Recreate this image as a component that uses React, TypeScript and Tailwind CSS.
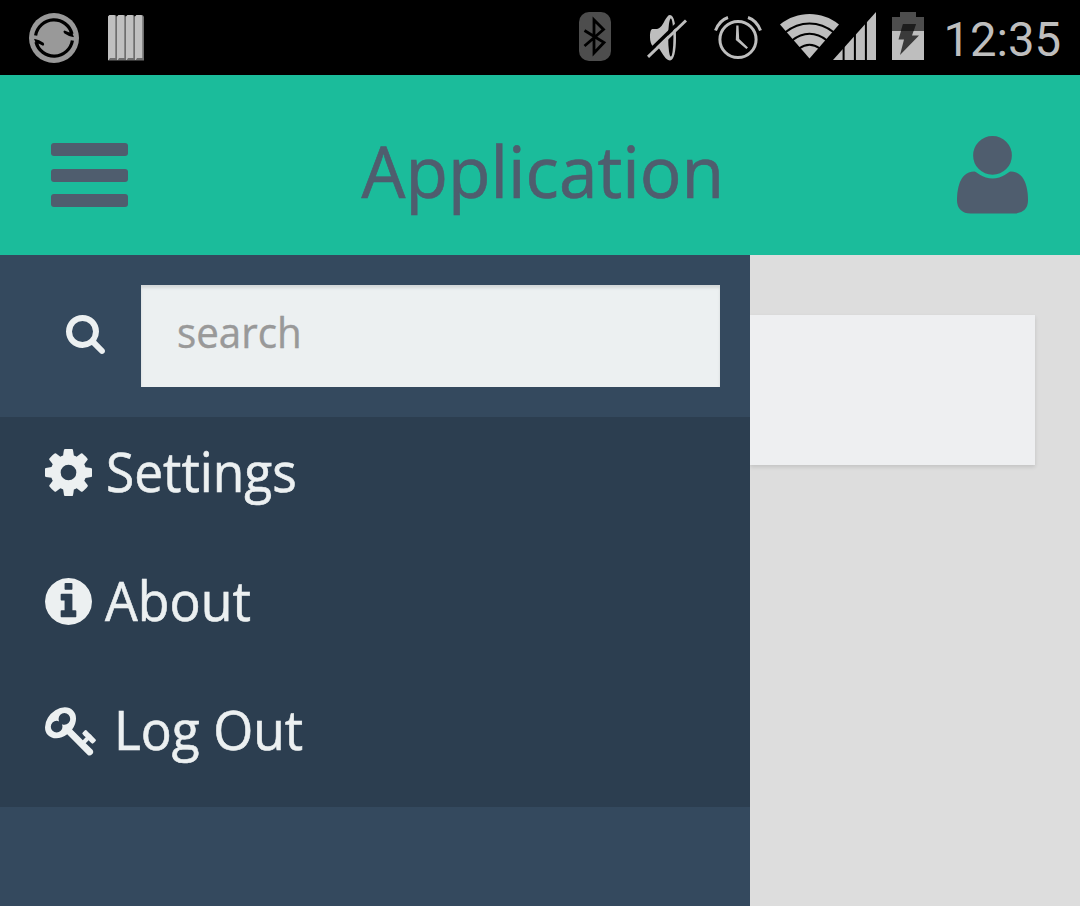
import React from "react";

const PATHS = {
  user: "M1600 1405q0 120-73 189.5t-194 69.5h-874q-121 0-194-69.5t-73-189.5q0-53 3.5-103.5t14-109 26.5-108.5 43-97.5 62-81 85.5-53.5 111.5-20q9 0 42 21.5t74.5 48 108 48 133.5 21.5 133.5-21.5 108-48 74.5-48 42-21.5q61 0 111.5 20t85.5 53.5 62 81 43 97.5 26.5 108.5 14 109 3.5 103.5zm-320-893q0 159-112.5 271.5t-271.5 112.5-271.5-112.5-112.5-271.5 112.5-271.5 271.5-112.5 271.5 112.5 112.5 271.5z",
  search: "M1216 832q0-185-131.5-316.5t-316.5-131.5-316.5 131.5-131.5 316.5 131.5 316.5 316.5 131.5 316.5-131.5 131.5-316.5zm512 832q0 52-38 90t-90 38q-54 0-90-38l-343-342q-179 124-399 124-143 0-273.5-55.5t-225-150-150-225-55.5-273.5 55.5-273.5 150-225 225-150 273.5-55.5 273.5 55.5 225 150 150 225 55.5 273.5q0 220-124 399l343 343q37 37 37 90z",
  cog: "M1152 896q0-106-75-181t-181-75-181 75-75 181 75 181 181 75 181-75 75-181zm512-109v222q0 12-8 23t-20 13l-185 28q-19 54-39 91 35 50 107 138 10 12 10 25t-9 23q-27 37-99 108t-94 71q-12 0-26-9l-138-108q-44 23-91 38-16 136-29 186-7 28-36 28h-222q-14 0-24.5-8.5t-11.5-21.5l-28-184q-49-16-90-37l-141 107q-10 9-25 9-14 0-25-11-126-114-165-168-7-10-7-23 0-12 8-23 15-21 51-66.5t54-70.5q-27-50-41-99l-183-27q-13-2-21-12.5t-8-23.5v-222q0-12 8-23t19-13l186-28q14-46 39-92-40-57-107-138-10-12-10-24 0-10 9-23 26-36 98.5-107.5t94.5-71.5q13 0 26 10l138 107q44-23 91-38 16-136 29-186 7-28 36-28h222q14 0 24.5 8.5t11.5 21.5l28 184q49 16 90 37l142-107q9-9 24-9 13 0 25 10 129 119 165 170 7 8 7 22 0 12-8 23-15 21-51 66.5t-54 70.5q26 50 41 98l183 28q13 2 21 12.5t8 23.5z",
  info: "M1152 1376v-160q0-14-9-23t-23-9h-96v-512q0-14-9-23t-23-9h-320q-14 0-23 9t-9 23v160q0 14 9 23t23 9h96v320h-96q-14 0-23 9t-9 23v160q0 14 9 23t23 9h448q14 0 23-9t9-23zm-128-896v-160q0-14-9-23t-23-9h-192q-14 0-23 9t-9 23v160q0 14 9 23t23 9h192q14 0 23-9t9-23zm640 416q0 209-103 385.5t-279.5 279.5-385.5 103-385.5-103-279.5-279.5-103-385.5 103-385.5 279.5-279.5 385.5-103 385.5 103 279.5 279.5 103 385.5z",
  key: "M832 512q0-80-56-136t-136-56-136 56-56 136q0 42 19 83-41-19-83-19-80 0-136 56t-56 136 56 136 136 56 136-56 56-136q0-42-19-83 41 19 83 19 80 0 136-56t56-136zm851 704q0 17-49 66t-66 49q-9 0-28.5-16t-36.5-33-38.5-40-24.5-26l-96 96 220 220q28 28 28 68 0 42-39 81t-81 39q-40 0-68-28l-671-671q-176 131-365 131-163 0-265.5-102.5t-102.5-265.5q0-160 95-313t248-248 313-95q163 0 265.5 102.5t102.5 265.5q0 189-131 365l355 355 96-96q-3-3-26-24.5t-40-38.5-33-36.5-16-28.5q0-17 49-66t66-49q13 0 23 10 6 6 46 44.5t82 79.5 86.5 86 73 78 28.5 41z",
};

function Glyph({ name, viewBox, className }: { name: keyof typeof PATHS; viewBox: string; className: string }) {
  return (
    <svg viewBox={viewBox} className={className} fill="currentColor" aria-hidden="true">
      <path d={PATHS[name]} />
    </svg>
  );
}

function SyncIcon() {
  return (
    <svg width="50" height="50" viewBox="0 0 50 50" aria-hidden="true">
      <circle cx="25" cy="25" r="25" fill="#999" />
      <g fill="none" stroke="#000" strokeWidth="3.2" strokeLinejoin="round">
        <path d="M6.600 22.500A18.600 18.600 0 0 1 43 21" />
        <path d="M43.400 27.500A18.600 18.600 0 0 1 7 29" />
      </g>
      <path d="M45 24.200L41 14.500L40.500 19.500L35.500 17.500Q33.500 18 35.500 20.500Q39.500 23.500 45 24.200z" fill="#000" />
      <path d="M5 25.800L9 35.500L9.500 30.500L14 32.800Q16 32 14.500 29.800Q10.500 26.800 5 25.800z" fill="#000" />
      <path d="M4 25L9 25M41 25L46 25" stroke="#999" strokeWidth="1.500" />
    </svg>
  );
}

function BarsStackIcon() {
  return (
    <svg width="36" height="46" viewBox="0 0 36 46" aria-hidden="true">
      {[0, 9, 18, 27].map((x) => (
        <g key={x}>
          <path d={`M${x} 1.5l1.5-1.5h6l1.5 1.5V45.5H${x}z`} fill="#6e6e6e" />
          <path d={`M${x} 1.5l1.5-1.5h5l.8 1.5V43H${x + 2}L${x + 0.8} 45H${x}z`} fill="#c0c0c0" />
        </g>
      ))}
    </svg>
  );
}

function BluetoothIcon() {
  return (
    <svg width="32" height="49" viewBox="0 0 32 49" aria-hidden="true">
      <rect width="32" height="49" rx="10" fill="#4d4d4d" />
      <path d="M5.500 18.500L25 30.500L15 41V8L24.500 17.500L5.500 34" fill="none" stroke="#000" strokeWidth="2.8" />
    </svg>
  );
}

function MutedIcon() {
  return (
    <svg width="40" height="46" viewBox="0 0 40 46" aria-hidden="true">
      <path d="M5 14h5c4-1 6-5 8-9 2-3 3-5 5-5 4 0 6 10 6 23s-2 22.500-6 22.500c-3 0-6-4-9-9-1-2-3-5-6-5H6c-2-2-3-6-3-9 0-3 0-7 2-8.500z" fill="#bebebe" />
      <ellipse cx="23.800" cy="22.500" rx="2.600" ry="19" fill="#000" />
      <path d="M-1 39.500L36.500 3" stroke="#000" strokeWidth="3.500" />
      <path d="M1 41.800L39 5.500" stroke="#bebebe" strokeWidth="3" />
    </svg>
  );
}

function AlarmIcon() {
  return (
    <svg width="48" height="46" viewBox="0 0 48 46" aria-hidden="true">
      <g fill="none" stroke="#bebebe">
        <circle cx="24" cy="24.500" r="18.100" strokeWidth="3" />
        <path d="M1.500 15.500C4 9 8 4.500 14 2.500M46.500 15.500C44 9 40 4.500 34 2.500" strokeWidth="3" />
      </g>
      <path d="M22.300 10.500h2.200l.7 13.500 8.800 8.500-1.600 1.600L21.800 25z" fill="#bebebe" />
    </svg>
  );
}

function WifiIcon() {
  return (
    <svg width="59" height="45" viewBox="0 0 59 45" aria-hidden="true">
      <path d="M0 10.500C17-3.500 42-3.500 59 10.500L29.500 44.500z" fill="#bebebe" />
      <g fill="none" stroke="#000" strokeWidth="2">
        <path d="M5 18.500C20 6.500 39 6.500 54 18.500" />
        <path d="M12 26.500C23 17.500 36 17.500 47 26.500" />
        <path d="M19 34.500C26 29.500 33 29.500 40 34.500" />
      </g>
    </svg>
  );
}

function SignalIcon() {
  return (
    <svg width="43" height="48" viewBox="0 0 43 48" aria-hidden="true">
      <path d="M0 48L43 0V48z" fill="#bebebe" />
      <path d="M10.600 0V48M21.900 0V48M32.900 0V48" stroke="#000" strokeWidth="2" />
    </svg>
  );
}

function BatteryIcon() {
  return (
    <svg width="32" height="48" viewBox="0 0 32 48" aria-hidden="true">
      <path d="M0 5h8V0h16v5h8v14H0z" fill="#4d4d4d" />
      <path d="M0 19h32v29H0z" fill="#bebebe" />
      <path d="M11 12h13l-4 11.500h7L8 43l4-15.500H6.500z" fill="#3a3a3a" />
      <path d="M11 12h13l-2.400 7H8.900z" fill="#1d1d1d" />
    </svg>
  );
}

function StatusBar() {
  return (
    <div className="flex h-[75px] shrink-0 items-start bg-black">
      <div className="ml-[29px] mt-[13px]"><SyncIcon /></div>
      <div className="ml-[29px] mt-[15px]"><BarsStackIcon /></div>
      <div className="ml-auto mt-3"><BluetoothIcon /></div>
      <div className="ml-9 mt-[15px]"><MutedIcon /></div>
      <div className="ml-[27px] mt-[15px]"><AlarmIcon /></div>
      <div className="ml-[18px] mt-[14px]"><WifiIcon /></div>
      <div className="-ml-1.5 mt-3"><SignalIcon /></div>
      <div className="ml-4 mt-3"><BatteryIcon /></div>
      <div className="ml-[18px] mr-[17px] mt-2 w-[121px] origin-left scale-x-[0.985] whitespace-nowrap text-right font-[Roboto,sans-serif] text-[48px] leading-[64px] text-[#bebebe]">
        12:35
      </div>
    </div>
  );
}

function Header() {
  return (
    <header className="flex h-[180px] shrink-0 items-center justify-between bg-[#1bbc9b] pl-[51px] pr-[52px] pt-5 text-[#4f5d6e]">
      <button className="flex h-16 w-[77px] flex-col justify-between" aria-label="Menu">
        <span className="h-[13px] w-full rounded-[3px] bg-[#4f5d6e]" />
        <span className="h-[13px] w-full rounded-[3px] bg-[#4f5d6e]" />
        <span className="h-[13px] w-full rounded-[3px] bg-[#4f5d6e]" />
      </button>
      <h1 className="-mt-[11px] origin-center scale-x-[0.965] text-[72px] leading-[96px] [-webkit-text-stroke:0.7px_currentColor]">Application</h1>
      <Glyph name="user" viewBox="192 128 1408 1536" className="h-[77.500px] w-[71px]" />
    </header>
  );
}

function MenuItem({ icon, viewBox, iconClass, label, labelClass }: {
  icon: keyof typeof PATHS;
  viewBox: string;
  iconClass: string;
  label: string;
  labelClass: string;
}) {
  return (
    <li className="flex h-[129px] items-start pl-[45px]">
      <Glyph name={icon} viewBox={viewBox} className={iconClass} />
      <span className={labelClass}>{label}</span>
    </li>
  );
}

export default function App() {
  return (
    <div className="flex h-[906px] w-[1080px] flex-col overflow-hidden bg-[#ddd] font-['Open_Sans',sans-serif]">
      <StatusBar />
      <Header />
      <div className="flex flex-1">
        <nav className="z-10 w-[750px] shrink-0 bg-[#34495e] text-[#ecf0f1]">
          <div className="flex h-[162px] items-start pl-[66px] pr-[30px] pt-[30px]">
            <Glyph name="search" viewBox="64 128 1664 1664" className="mt-[30px] size-[39px]" />
            <label className="ml-9 flex h-[102px] flex-1 bg-[#ecf0f1] pl-9 shadow-[inset_0_3px_3px_rgba(0,0,0,0.1)]">
              <input
                type="text"
                placeholder="search"
                className="h-[93px] w-full origin-left scale-x-[0.96] bg-transparent text-[42px] outline-none [-webkit-text-stroke:0.4px_#999] placeholder:text-[#999]"
              />
            </label>
          </div>
          <ul className="h-[390px] bg-[#2c3e50]">
            <MenuItem
              icon="cog" viewBox="128 128 1536 1536" iconClass="mt-8 size-[47px]"
              label="Settings" labelClass="ml-[14px] mt-[17px] origin-left scale-x-[0.953] text-[54px] leading-[74px] [-webkit-text-stroke:0.6px_currentColor]"
            />
            <MenuItem
              icon="info" viewBox="128 128 1536 1536" iconClass="mt-8 size-[47px]"
              label="About" labelClass="ml-[13px] mt-[17px] origin-left scale-x-[0.96] text-[54px] leading-[74px] [-webkit-text-stroke:0.6px_currentColor]"
            />
            <MenuItem
              icon="key" viewBox="0 128 1683 1664" iconClass="mt-8 h-[51px] w-[51px]"
              label="Log Out" labelClass="ml-[18px] mt-[17px] origin-left scale-x-[0.953] text-[54px] leading-[74px] [-webkit-text-stroke:0.6px_currentColor]"
            />
          </ul>
        </nav>
        <main className="flex-1 pr-[45px] pt-[60px]">
          <section className="h-[150px] bg-[#eeeff1] shadow-[0_2px_4px_rgba(0,0,0,0.12)]" />
        </main>
      </div>
    </div>
  );
}
